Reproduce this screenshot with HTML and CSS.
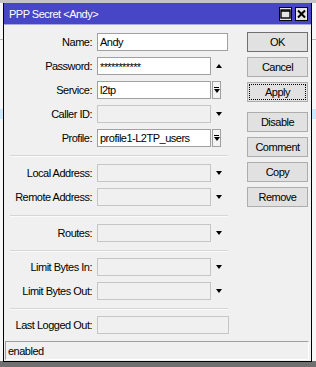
FILE: index.html
```html
<!DOCTYPE html>
<html lang="en">

<head>
  <meta charset="UTF-8" />
  <meta name="viewport" content="width=device-width, initial-scale=1.0" />
  <title>PPP Secret</title>
  <link rel="stylesheet" href="styles.css">
</head>

<body>
  <div class="window">
    <div class="titlebar">
      <span class="title">PPP Secret &lt;Andy&gt;</span>
      <span class="tb-btn">
        <svg width="11" height="10" viewBox="0 0 11 10"><rect x="1" y="1" width="9" height="8" fill="none" stroke="#000" stroke-width="1.4" /><line x1="1" y1="2" x2="10" y2="2" stroke="#000" stroke-width="1.5" /></svg>
      </span>
      <span class="tb-btn">
        <svg width="11" height="10" viewBox="0 0 11 10"><path d="M2 1.5 L9 8.5 M9 1.5 L2 8.5" stroke="#000" stroke-width="2" /></svg>
      </span>
    </div>

    <div class="content">
      <div class="form">
        <div class="row">
          <label>Name:</label>
          <div class="field wide">Andy</div>
        </div>
        <div class="row">
          <label>Password:</label>
          <div class="field pass">***********</div>
          <span class="arrow up"></span>
        </div>
        <div class="row">
          <label>Service:</label>
          <div class="field">l2tp</div>
          <span class="drop"><i></i></span>
        </div>
        <div class="row">
          <label>Caller ID:</label>
          <div class="field off"></div>
          <span class="arrow"></span>
        </div>
        <div class="row">
          <label>Profile:</label>
          <div class="field">profile1-L2TP_users</div>
          <span class="drop"><i></i></span>
        </div>

        <div class="sep"></div>

        <div class="row">
          <label>Local Address:</label>
          <div class="field off"></div>
          <span class="arrow"></span>
        </div>
        <div class="row">
          <label>Remote Address:</label>
          <div class="field off"></div>
          <span class="arrow"></span>
        </div>

        <div class="sep wide-top"></div>

        <div class="row">
          <label>Routes:</label>
          <div class="field off"></div>
          <span class="arrow"></span>
        </div>

        <div class="sep tight"></div>

        <div class="row">
          <label>Limit Bytes In:</label>
          <div class="field off"></div>
          <span class="arrow"></span>
        </div>
        <div class="row">
          <label>Limit Bytes Out:</label>
          <div class="field off"></div>
          <span class="arrow"></span>
        </div>

        <div class="sep tight"></div>

        <div class="row">
          <label>Last Logged Out:</label>
          <div class="field off full"></div>
        </div>
      </div>

      <div class="actions">
        <button class="default">OK</button>
        <button>Cancel</button>
        <button class="focus"><span>Apply</span></button>
        <button class="gap">Disable</button>
        <button>Comment</button>
        <button>Copy</button>
        <button>Remove</button>
      </div>
    </div>

    <div class="status">enabled</div>
  </div>
</body>

</html>
```

FILE: styles.css
```css
* {
  margin: 0;
  padding: 0;
  box-sizing: border-box;
}

body {
  width: 316px;
  height: 367px;
  overflow: hidden;
  font-family: "Liberation Sans", Arial, sans-serif;
  font-size: 11px;
  letter-spacing: -0.5px;
  color: #000;
  background:
    linear-gradient(to bottom,
      #c4c4c4 0, #c4c4c4 3px,
      #f7f7f7 3px, #f7f7f7 39px,
      #b8b8b8 39px, #b8b8b8 40px,
      #f7f7f7 40px, #f7f7f7 109px,
      #cce8ff 109px, #cce8ff 119px,
      #f7f7f7 119px, #f7f7f7 361px,
      #707070 361px);
}

.window {
  margin: 3px 0 0 3px;
  width: 309px;
  height: 359px;
  background-color: #f0f0f0;
  border: 1px solid #000;
  border-top: none;
  display: flex;
  flex-direction: column;
}

.titlebar {
  flex-shrink: 0;
  height: 22px;
  background-color: #4646c6;
  border-bottom: 1px solid #a8a8e6;
  display: flex;
  align-items: center;
  padding: 0 3px 0 5px;
  color: #fff;
}

.title {
  flex: 1;
  padding-top: 1px;
}

.tb-btn {
  width: 13px;
  height: 14px;
  margin-left: 3px;
  background-color: #e4e4e4;
  border: 1px solid #000;
  display: flex;
  align-items: center;
  justify-content: center;
}

.content {
  flex: 1;
  min-height: 0;
  overflow: hidden;
  display: flex;
  padding-top: 8px;
}

.form {
  width: 239px;
  display: flex;
  flex-direction: column;
}

.row {
  flex-shrink: 0;
  display: flex;
  align-items: center;
  height: 18px;
  margin-bottom: 6px;
}

.row label {
  width: 88px;
  margin-right: 5px;
  text-align: right;
}

.field {
  width: 114px;
  height: 18px;
  line-height: 16px;
  padding: 0 2px;
  background-color: #fff;
  border: 1px solid #a0a0a0;
  white-space: nowrap;
  overflow: hidden;
}

.field.wide {
  width: 131px;
}

.field.full {
  width: 132px;
}

.field.off {
  background-color: #f0f0f0;
  border-color: #c6c6c6;
}

.field.pass {
  line-height: 19px;
  letter-spacing: -0.6px;
}

.arrow {
  width: 0;
  height: 0;
  margin-left: 5px;
  border-left: 3.5px solid transparent;
  border-right: 3.5px solid transparent;
  border-top: 4px solid #000;
}

.arrow.up {
  border-top: none;
  border-bottom: 4px solid #000;
}

.drop {
  width: 9px;
  height: 18px;
  margin-left: 1px;
  border: 1px solid #a0a0a0;
  background-color: #f4f4f4;
  display: flex;
  flex-direction: column;
  align-items: center;
  justify-content: center;
}

.drop i {
  width: 5px;
  height: 0;
  border-top: 1px solid #000;
  margin-bottom: 1px;
}

.drop::after {
  content: "";
  width: 0;
  height: 0;
  border-left: 3px solid transparent;
  border-right: 3px solid transparent;
  border-top: 4px solid #000;
}

.sep {
  flex-shrink: 0;
  width: 218px;
  margin: 2px 0 7px 6px;
  border-top: 1px solid #d6d6d6;
  border-bottom: 1px solid #fafafa;
}

.sep.wide-top {
  margin-top: 3px;
}

.sep.tight {
  margin-bottom: 6px;
}

.actions {
  display: flex;
  flex-direction: column;
  gap: 5px;
  margin-left: 4px;
  margin-top: -1px;
}

button {
  flex-shrink: 0;
  width: 61px;
  height: 20px;
  font-family: inherit;
  font-size: 11px;
  letter-spacing: -0.5px;
  color: #000;
  background-color: #e1e1e1;
  border: 1px solid #adadad;
}

button.default {
  border-color: #707070;
}

button.focus span {
  display: block;
  margin: 1px;
  line-height: 14px;
  border: 1px dotted #000;
}

button.gap {
  margin-top: 5px;
}

.status {
  flex-shrink: 0;
  height: 19px;
  margin: 0 2px 1px 1px;
  padding-left: 2px;
  line-height: 18px;
  border-top: 1px solid #a0a0a0;
  border-left: 1px solid #a0a0a0;
  border-right: 1px solid #fff;
  border-bottom: 1px solid #fff;
}
```
